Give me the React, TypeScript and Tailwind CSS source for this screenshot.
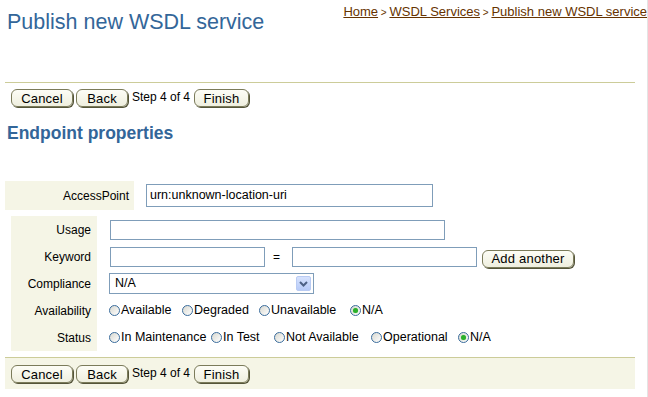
import type { ReactNode } from "react";

function Btn({ children, w }: { children: ReactNode; w: string }) {
  return (
    <button
      type="button"
      className={`${w} h-[18px] shrink-0 rounded-[6px] border border-[#7b7b5a] bg-gradient-to-b from-[#fdfdf6] to-[#efefdf] text-[13px] leading-[15px] tracking-[0.2px] text-black shadow-[1px_1px_0_#55553a]`}
    >
      {children}
    </button>
  );
}

function Radio({ label, checked, w }: { label: string; checked?: boolean; w?: string }) {
  return (
    <span className={`flex shrink-0 items-center ${w ?? ""}`}>
      <span className="flex h-[11px] w-[11px] items-center justify-center rounded-full border border-[#3a6c9c] bg-gradient-to-br from-[#d8d8d0] to-white">
        {checked && <span className="h-[5px] w-[5px] rounded-full bg-[#2bb02b] shadow-[0_0_1px_#7fd07f]" />}
      </span>
      <span className="ml-[1px]">{label}</span>
    </span>
  );
}

function Toolbar() {
  return (
    <div className="flex items-start">
      <Btn w="w-[62px]">Cancel</Btn>
      <div className="ml-[3px]" />
      <Btn w="w-[52px]">Back</Btn>
      <span className="mx-[4px] mt-[1px] text-[12px] leading-[14px]">Step 4 of 4</span>
      <Btn w="w-[55px]">Finish</Btn>
    </div>
  );
}

const input = "h-[20px] border border-[#7f9db9] bg-white";

export default function App() {
  return (
    <div className="h-[397px] w-[648px] overflow-hidden border-r border-[#e4e4e4] bg-white font-['Liberation_Sans',Arial,sans-serif] text-black">
      {/* header */}
      <div className="flex h-[82px] items-start justify-between">
        <h1 className="pl-[7px] pt-[10px] text-[21.5px] leading-[24px] text-[#336699]">Publish new WSDL service</h1>
        <div className="pt-[4px] text-[13px] leading-[15px] text-[#663300]">
          <a className="underline">Home</a>
          <span className="text-[10px]"> &gt; </span>
          <a className="underline">WSDL Services</a>
          <span className="text-[10px]"> &gt; </span>
          <a className="underline">Publish new WSDL service</a>
        </div>
      </div>
      <div className="ml-[5px] h-px w-[630px] bg-[#cccc99]" />

      <div className="pl-[11px] pt-[6px]">
        <Toolbar />
      </div>

      <h2 className="mt-[16px] pl-[7px] text-[17.5px] font-bold leading-[20px] text-[#336699]">Endpoint properties</h2>

      {/* access point */}
      <div className="ml-[5px] mt-[38px] flex h-[29px] items-center">
        <div className="flex h-full w-[129px] items-center justify-end bg-[#f5f5e6] pr-[5px] text-[12px]">AccessPoint</div>
        <div className="ml-[12px] flex h-[23px] w-[287px] items-center border border-[#7f9db9] pl-[3px] text-[12.5px]">
          urn:unknown-location-uri
        </div>
      </div>

      {/* details */}
      <div className="ml-[11px] mt-[6px] flex text-[12px]">
        <div className="flex w-[86px] flex-col bg-[#f5f5e6] pr-[6px] text-right">
          {["Usage", "Keyword", "Compliance", "Availability", "Status"].map((l) => (
            <div key={l} className="flex h-[27px] items-center justify-end">{l}</div>
          ))}
        </div>
        <div className="ml-[13px] flex flex-col">
          <div className="flex h-[27px] items-center">
            <div className={`${input} w-[335px]`} />
          </div>
          <div className="flex h-[27px] items-center">
            <div className={`${input} w-[155px]`} />
            <span className="ml-[8px] mr-[12px]">=</span>
            <div className={`${input} w-[185px]`} />
            <div className="ml-[5px] mt-[5px]">
              <Btn w="w-[92px]">Add another</Btn>
            </div>
          </div>
          <div className="flex h-[27px] items-center">
            <div className="-ml-px flex h-[21px] w-[205px] items-center justify-between border border-[#7f9db9] pl-[5px] pr-[2px] text-[12.5px]">
              <span>N/A</span>
              <span className="flex h-[15px] w-[15px] items-center justify-center rounded-[2px] border border-[#b9cbf3] bg-gradient-to-b from-[#d6e2fd] to-[#b7cbf8]">
                <svg width="9" height="6" viewBox="0 0 9 6">
                  <path d="M1 1 L4.5 4.5 L8 1" fill="none" stroke="#4d6185" strokeWidth="2" />
                </svg>
              </span>
            </div>
          </div>
          <div className="-ml-px flex h-[27px] items-center text-[12.5px]">
            <Radio label="Available" w="w-[73px]" />
            <Radio label="Degraded" w="w-[77px]" />
            <Radio label="Unavailable" w="w-[91px]" />
            <Radio label="N/A" checked />
          </div>
          <div className="-ml-px flex h-[27px] items-center text-[12.5px]">
            <Radio label="In Maintenance" w="w-[102px]" />
            <Radio label="In Test" w="w-[63px]" />
            <Radio label="Not Available" w="w-[97px]" />
            <Radio label="Operational" w="w-[87px]" />
            <Radio label="N/A" checked />
          </div>
        </div>
      </div>

      {/* bottom bar */}
      <div className="ml-[5px] mt-[6px] h-[32px] w-[630px] border-t border-[#cccc99] bg-[#f5f5e6] pl-[6px] pt-[7px]">
        <Toolbar />
      </div>
    </div>
  );
}
